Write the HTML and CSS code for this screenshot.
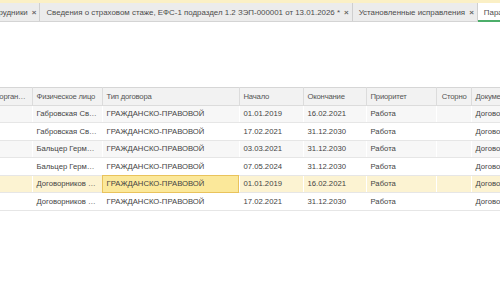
FILE: index.html
```html
<!DOCTYPE html>
<html lang="ru">
<head>
  <meta charset="UTF-8">
  <title>Сведения о страховом стаже</title>
  <link rel="stylesheet" href="styles.css">
</head>
<body>
  <div class="topline"></div>
  <div class="tabs">
    <div class="tab"><span class="title">Сотрудники</span><span class="close">×</span></div>
    <div class="tab"><span class="title">Сведения о страховом стаже, ЕФС-1 подраздел 1.2 ЗЭП-000001 от 13.01.2026 *</span><span class="close">×</span></div>
    <div class="tab"><span class="title">Установленные исправления</span><span class="close">×</span></div>
    <div class="tab active"><span class="title">Параметры</span></div>
  </div>

  <div class="grid-wrap">
    <table class="grid">
      <colgroup>
        <col style="width: 92px">
        <col style="width: 70px">
        <col style="width: 137px">
        <col style="width: 64px">
        <col style="width: 63px">
        <col style="width: 70px">
        <col style="width: 35px">
        <col style="width: 90px">
      </colgroup>
      <thead>
        <tr>
          <th>Подразделение организации</th>
          <th>Физическое лицо</th>
          <th>Тип договора</th>
          <th>Начало</th>
          <th>Окончание</th>
          <th>Приоритет</th>
          <th class="right">Сторно</th>
          <th>Документ</th>
        </tr>
      </thead>
      <tbody>
        <tr class="odd">
          <td></td>
          <td>Габровская Светлана Игоревна</td>
          <td>ГРАЖДАНСКО-ПРАВОВОЙ</td>
          <td>01.01.2019</td>
          <td>16.02.2021</td>
          <td>Работа</td>
          <td></td>
          <td>Договор ГПХ</td>
        </tr>
        <tr>
          <td></td>
          <td>Габровская Светлана Игоревна</td>
          <td>ГРАЖДАНСКО-ПРАВОВОЙ</td>
          <td>17.02.2021</td>
          <td>31.12.2030</td>
          <td>Работа</td>
          <td></td>
          <td>Договор ГПХ</td>
        </tr>
        <tr class="odd">
          <td></td>
          <td>Бальцер Герман Оскарович</td>
          <td>ГРАЖДАНСКО-ПРАВОВОЙ</td>
          <td>03.03.2021</td>
          <td>31.12.2030</td>
          <td>Работа</td>
          <td></td>
          <td>Договор ГПХ</td>
        </tr>
        <tr>
          <td></td>
          <td>Бальцер Герман Оскарович</td>
          <td>ГРАЖДАНСКО-ПРАВОВОЙ</td>
          <td>07.05.2024</td>
          <td>31.12.2030</td>
          <td>Работа</td>
          <td></td>
          <td>Договор ГПХ</td>
        </tr>
        <tr class="selected">
          <td></td>
          <td>Договорников Петр Сергеевич</td>
          <td class="current">ГРАЖДАНСКО-ПРАВОВОЙ</td>
          <td>01.01.2019</td>
          <td>16.02.2021</td>
          <td>Работа</td>
          <td></td>
          <td>Договор ГПХ</td>
        </tr>
        <tr>
          <td></td>
          <td>Договорников Петр Сергеевич</td>
          <td>ГРАЖДАНСКО-ПРАВОВОЙ</td>
          <td>17.02.2021</td>
          <td>31.12.2030</td>
          <td>Работа</td>
          <td></td>
          <td>Договор ГПХ</td>
        </tr>
      </tbody>
    </table>
  </div>
</body>
</html>
```

FILE: styles.css
```css
* {
  margin: 0;
  padding: 0;
  box-sizing: border-box;
}
body {
  width: 500px;
  height: 300px;
  overflow: hidden;
  background-color: #fff;
  font-family: "Liberation Sans", Arial, sans-serif;
  font-size: 7.7px;
  color: #4d4d4d;
}
.topline {
  height: 3px;
  background-color: #fbf0c6;
}
.tabs {
  display: flex;
  height: 19px;
  background-color: #ececec;
  border-bottom: 1px solid #d4d4d4;
  margin-left: -21px;
  white-space: nowrap;
  font-size: 7.9px;
}
.tab {
  display: flex;
  align-items: center;
  gap: 4px;
  padding: 0 3px 0 6px;
  border-right: 1px solid #cfcfcf;
  color: #4d4d4d;
}
.tab .close {
  font-size: 8px;
  font-weight: bold;
  color: #666;
}
.tab.active {
  background-color: #fff;
  border-right: none;
  box-shadow: inset 0 -2px 0 #4cae6a;
  margin-bottom: -1px;
}
.grid-wrap {
  margin-top: 65px;
  overflow: hidden;
}
.grid {
  margin-left: -60px;
  border-collapse: collapse;
  table-layout: fixed;
  width: 621px;
}
.grid th,
.grid td {
  height: 17.5px;
  padding: 0 4px;
  text-align: left;
  white-space: nowrap;
  overflow: hidden;
  text-overflow: ellipsis;
  font-weight: normal;
}
.grid th {
  background-color: #f2f2f2;
  border-top: 1px solid #d6d6d6;
  border-bottom: 1px solid #dcdcdc;
  border-right: 1px solid #dcdcdc;
  color: #555;
  letter-spacing: -0.2px;
}
.grid th.right {
  text-align: right;
}
.grid td {
  border-bottom: 1px solid #e6e6e6;
  border-right: 1px solid rgba(255, 255, 255, 0.7);
  color: #444;
}
.grid tr.odd td {
  background-color: #f7f7f7;
}
.grid tr.selected td {
  background-color: #fcf3d2;
}
.grid tr.selected td.current {
  background-color: #fbe89a;
  outline: 1px solid #e9c35c;
  outline-offset: -1px;
}
```
